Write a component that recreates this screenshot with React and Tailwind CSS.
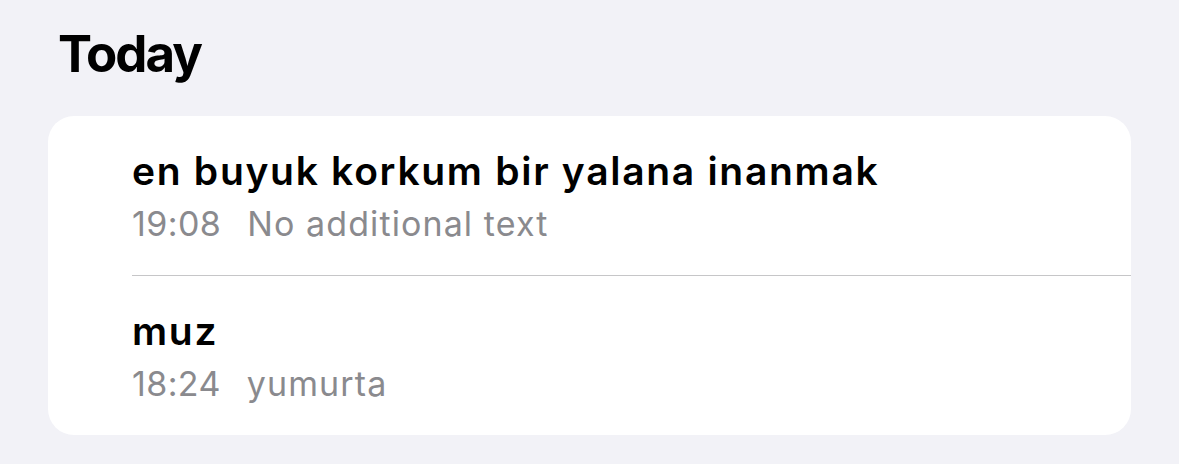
export default function App() {
  const notes = [
    { title: "en buyuk korkum bir yalana inanmak", time: "19:08", sub: "No additional text" },
    { title: "muz", time: "18:24", sub: "yumurta" },
  ];
  return (
    <div className="w-[1179px] h-[464px] bg-[#f2f2f7] overflow-hidden" style={{ fontFamily: "Inter, 'Noto Sans', sans-serif" }}>
      <div className="h-[116px] pl-[58px] pt-[28px]">
        <h1 className="text-[51px] leading-none font-bold text-black tracking-[-2px]">Today</h1>
      </div>
      <div className="mx-[48px] bg-white rounded-[26px] overflow-hidden">
        {notes.map((n, i) => (
          <div key={i}>
            {i > 0 && <div className="ml-[84px] h-px bg-[#c6c6c8]" />}
            <div className="pl-[84px] pt-[35px] pb-[34px] flex flex-col gap-[17px]">
              <div className="text-[39px] leading-none font-semibold text-black tracking-[1.7px]">{n.title}</div>
              <div className="text-[34px] leading-none text-[#8a8a8e] flex">
                <span className="tracking-[0.4px]">{n.time}</span>
                <span className="ml-[26px] tracking-[1.1px]">{n.sub}</span>
              </div>
            </div>
          </div>
        ))}
      </div>
    </div>
  );
}
